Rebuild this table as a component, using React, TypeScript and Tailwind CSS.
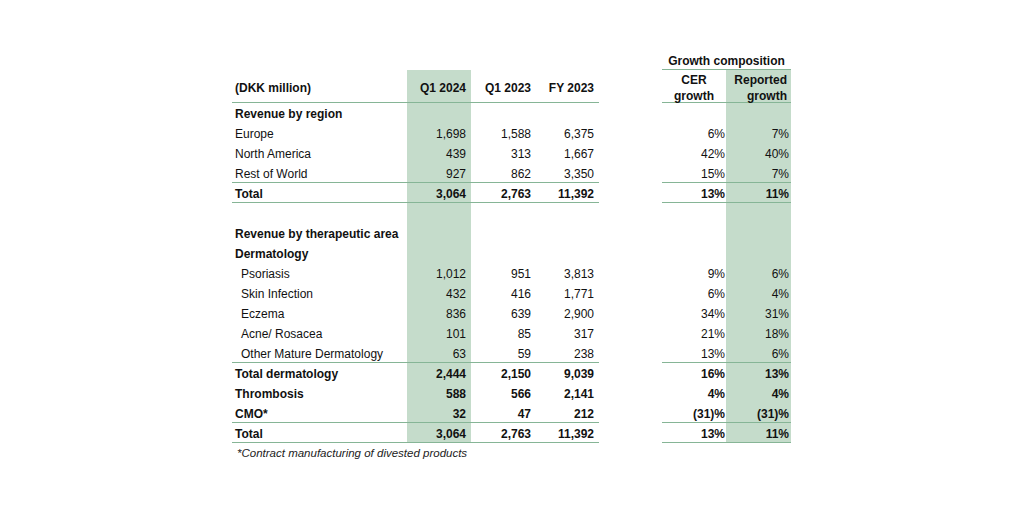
import React from 'react';

type Row = {
  label: string;
  indent?: boolean;
  bold?: boolean;
  vals?: [string, string, string];
  growth?: [string, string];
  line?: boolean;
};

const rows: Row[] = [
  { label: 'Revenue by region', bold: true },
  { label: 'Europe', vals: ['1,698', '1,588', '6,375'], growth: ['6%', '7%'] },
  { label: 'North America', vals: ['439', '313', '1,667'], growth: ['42%', '40%'] },
  { label: 'Rest of World', vals: ['927', '862', '3,350'], growth: ['15%', '7%'], line: true },
  { label: 'Total', bold: true, vals: ['3,064', '2,763', '11,392'], growth: ['13%', '11%'], line: true },
  { label: '' },
  { label: 'Revenue by therapeutic area', bold: true },
  { label: 'Dermatology', bold: true },
  { label: 'Psoriasis', indent: true, vals: ['1,012', '951', '3,813'], growth: ['9%', '6%'] },
  { label: 'Skin Infection', indent: true, vals: ['432', '416', '1,771'], growth: ['6%', '4%'] },
  { label: 'Eczema', indent: true, vals: ['836', '639', '2,900'], growth: ['34%', '31%'] },
  { label: 'Acne/ Rosacea', indent: true, vals: ['101', '85', '317'], growth: ['21%', '18%'] },
  { label: 'Other Mature Dermatology', indent: true, vals: ['63', '59', '238'], growth: ['13%', '6%'], line: true },
  { label: 'Total dermatology', bold: true, vals: ['2,444', '2,150', '9,039'], growth: ['16%', '13%'] },
  { label: 'Thrombosis', bold: true, vals: ['588', '566', '2,141'], growth: ['4%', '4%'] },
  { label: 'CMO*', bold: true, vals: ['32', '47', '212'], growth: ['(31)%', '(31)%'], line: true },
  { label: 'Total', bold: true, vals: ['3,064', '2,763', '11,392'], growth: ['13%', '11%'], line: true },
];

const green = 'bg-[#c5dccb]';
const line = 'border-b border-[#86b596]';

function TableRow({ row }: { row: Row }) {
  const b = row.line ? line : '';
  const weight = row.bold ? 'font-bold' : '';
  return (
    <div className={`flex h-[20px] ${weight}`}>
      <div className={`w-[175px] flex items-center pt-[2px] ${row.indent ? 'pl-[9px]' : 'pl-[3px]'} ${b}`}>{row.label}</div>
      <div className={`w-[64px] flex items-center justify-end pt-[2px] pr-[5px] ${green} ${b}`}>{row.vals?.[0]}</div>
      <div className={`w-[65px] flex items-center justify-end pt-[2px] pr-[5px] ${b}`}>{row.vals?.[1]}</div>
      <div className={`w-[63px] flex items-center justify-end pt-[2px] pr-[5px] ${b}`}>{row.vals?.[2]}</div>
      <div className="w-[63px]" />
      <div className={`w-[64px] flex items-center justify-end pt-[2px] pr-[1px] ${b}`}>{row.growth?.[0]}</div>
      <div className={`w-[65px] flex items-center justify-end pt-[2px] pr-[2px] ${green} ${b}`}>{row.growth?.[1]}</div>
    </div>
  );
}

export default function App() {
  return (
    <div className="w-[1024px] h-[512px] bg-white pt-[50px] pl-[232px] text-[12px] leading-[16px] text-[#111] font-[family-name:'Liberation_Sans',Arial,sans-serif]">
      {/* Growth composition heading */}
      <div className="flex h-[20px]">
        <div className="w-[430px]" />
        <div className={`w-[129px] flex items-center justify-center pt-[2px] font-bold ${line}`}>Growth composition</div>
      </div>

      {/* Column headings */}
      <div className="flex h-[33px] font-bold">
        <div className={`w-[175px] flex items-center pt-[4px] pl-[3px] ${line}`}>(DKK million)</div>
        <div className={`w-[64px] flex items-center justify-end pt-[4px] pr-[5px] ${green} ${line}`}>Q1 2024</div>
        <div className={`w-[65px] flex items-center justify-end pt-[4px] pr-[5px] ${line}`}>Q1 2023</div>
        <div className={`w-[63px] flex items-center justify-end pt-[4px] pr-[5px] ${line}`}>FY 2023</div>
        <div className="w-[63px]" />
        <div className={`w-[64px] flex flex-col items-center justify-center pt-[4px] ${line}`}>
          <span>CER</span>
          <span>growth</span>
        </div>
        <div className={`w-[65px] flex flex-col items-end justify-center pt-[4px] pr-[4px] ${green} ${line}`}>
          <span>Reported</span>
          <span>growth</span>
        </div>
      </div>

      {rows.map((r, i) => (
        <TableRow key={i} row={r} />
      ))}

      <div className="h-[20px] flex items-center pl-[5px] italic text-[11.5px] text-[#222]">
        *Contract manufacturing of divested products
      </div>
    </div>
  );
}
